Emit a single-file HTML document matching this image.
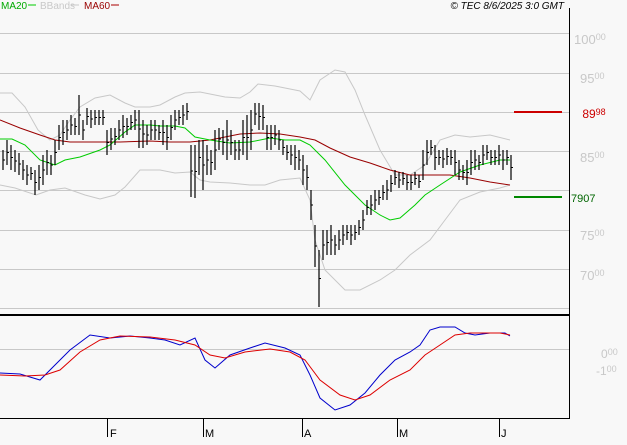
<!DOCTYPE html><html><head><style>body{margin:0;background:#f8f8f8;width:627px;height:440px;overflow:hidden;font-family:"Liberation Sans",sans-serif}</style></head><body>
<svg width="627" height="440" xmlns="http://www.w3.org/2000/svg" font-family="Liberation Sans, sans-serif">
<rect width="627" height="440" fill="#f8f8f8"/>
<g stroke="#c8c8c8" stroke-width="1">
<line x1="0" y1="33.5" x2="569" y2="33.5"/><line x1="0" y1="73.5" x2="569" y2="73.5"/><line x1="0" y1="112.5" x2="569" y2="112.5"/><line x1="0" y1="151.5" x2="569" y2="151.5"/><line x1="0" y1="190.5" x2="569" y2="190.5"/><line x1="0" y1="230.5" x2="569" y2="230.5"/><line x1="0" y1="269.5" x2="569" y2="269.5"/><line x1="0" y1="308.5" x2="569" y2="308.5"/>
<line x1="0" y1="349.5" x2="569" y2="349.5"/>
</g>
<line x1="569.5" y1="8" x2="569.5" y2="419" stroke="#000"/>
<line x1="0" y1="315" x2="569" y2="315" stroke="#000" stroke-width="2"/>
<line x1="0" y1="418.5" x2="569" y2="418.5" stroke="#000"/>
<g stroke="#000"><line x1="107.5" y1="419" x2="107.5" y2="437"/><line x1="203.5" y1="419" x2="203.5" y2="437"/><line x1="302.5" y1="419" x2="302.5" y2="437"/><line x1="397.5" y1="419" x2="397.5" y2="437"/><line x1="499.5" y1="419" x2="499.5" y2="437"/></g>
<g font-size="11" fill="#000"><text x="110" y="437">F</text><text x="205" y="437">M</text><text x="304" y="437">A</text><text x="399" y="437">M</text><text x="501" y="437">J</text></g>
<g fill="#c8c8c8" font-size="13"><text x="574" y="44">100<tspan font-size="9" dy="-4">00</tspan></text><text x="580" y="83">95<tspan font-size="9" dy="-4">00</tspan></text><text x="580" y="162">85<tspan font-size="9" dy="-4">00</tspan></text><text x="580" y="240">75<tspan font-size="9" dy="-4">00</tspan></text><text x="580" y="280">70<tspan font-size="9" dy="-4">00</tspan></text>
<text x="601" y="358" font-size="12">0<tspan font-size="9" dy="-3">00</tspan></text><text x="596" y="375" font-size="12">-1<tspan font-size="9" dy="-3">00</tspan></text></g>
<line x1="514" y1="112" x2="562" y2="112" stroke="#c00" stroke-width="2"/>
<text x="594" y="118" fill="#c00" font-size="12" text-anchor="middle">89<tspan font-size="9" dy="-3">98</tspan></text>
<line x1="514" y1="197" x2="562" y2="197" stroke="#080" stroke-width="2"/>
<text x="571" y="202" fill="#060" font-size="11">7907</text>
<g font-size="10"><text x="1" y="9" fill="#0a0">MA20</text><line x1="28" y1="5" x2="36" y2="5" stroke="#0c0"/><text x="40" y="9" fill="#c8c8c8">BBands</text><line x1="71" y1="5" x2="79" y2="5" stroke="#c8c8c8"/><text x="84" y="9" fill="#900">MA60</text><line x1="111" y1="5" x2="119" y2="5" stroke="#a00"/></g>
<text x="564" y="9" font-size="10" font-style="italic" text-anchor="end">© TEC 8/6/2025 3:0 GMT</text>
<g fill="none" stroke-width="1">
<polyline stroke="#c8c8c8" points="0,93 12,93 25,107 38,130 50,140 60,135 70,120 80,107 95,98 110,95 125,103 135,107 150,107 160,105 175,97 185,93 200,92 215,95 225,97 240,98 250,92 258,84 275,86 300,91 310,100 320,80 335,70 345,72 355,90 365,115 380,150 395,175 410,175 425,165 440,140 455,135 470,137 490,135 510,140"/>
<polyline stroke="#c8c8c8" points="0,185 15,188 36,195 50,190 65,188 85,195 100,199 115,195 125,187 140,170 160,170 175,173 190,172 200,180 210,182 230,183 250,185 265,185 280,180 300,178 310,200 315,240 325,270 345,290 360,290 380,280 395,270 410,255 430,240 445,220 460,200 480,192 500,188 510,185"/>
<polyline stroke="#900" points="0,120 20,128 40,135 55,140 70,142 100,142 120,142 150,141 170,142 190,142 210,140 240,134 260,133 280,134 300,137 315,140 330,148 350,157 370,163 390,170 410,175 450,175 470,178 490,182 510,185"/>
<polyline stroke="#0c0" points="0,139 12,139 25,145 40,160 55,165 65,160 80,157 100,150 110,145 125,132 135,125 150,125 160,126 175,126 185,128 195,137 210,140 230,143 250,142 270,138 285,140 300,140 310,145 325,160 345,185 365,205 380,215 390,220 400,218 415,205 425,195 440,185 460,172 480,165 500,160 510,160"/>
<polyline stroke="#00c" points="0,373 20,374 40,380 55,365 70,350 90,335 110,338 130,336 150,338 165,340 180,345 195,338 205,360 215,368 230,355 250,348 265,343 285,348 300,355 310,375 320,398 335,410 350,405 365,393 380,375 395,360 410,352 420,345 430,330 440,327 455,327 465,333 475,335 490,333 505,333 510,336"/>
<polyline stroke="#d00" points="0,375 25,376 45,375 60,370 80,352 100,340 120,336 150,337 175,340 195,345 210,355 225,358 245,352 270,349 290,352 305,360 320,380 340,395 355,400 370,395 390,380 410,370 425,355 440,345 455,335 470,333 500,333 510,335"/>
</g>
<g stroke="#000" stroke-width="1.2" id="bars"></g>
</svg>
<script>
var d=[[3,150,170],[7,140,165],[11,145,170],[15,150,172],[19,153,175],[23,160,180],[27,165,185],[31,167,180],[35,170,195],[39,165,190],[43,155,185],[47,150,175],[51,155,175],[55,140,165],[59,125,150],[63,120,145],[67,120,140],[71,115,135],[75,118,135],[79,95,135],[83,120,140],[87,108,125],[91,110,128],[95,110,125],[99,110,125],[103,110,125],[107,130,155],[111,128,150],[115,128,145],[119,120,140],[123,115,138],[127,118,135],[131,115,130],[135,110,130],[139,110,148],[143,120,148],[147,125,145],[151,120,140],[155,120,140],[159,125,140],[163,120,145],[167,125,150],[171,115,140],[175,110,130],[179,110,125],[183,105,125],[187,103,120],[191,145,197],[195,145,198],[199,140,175],[203,140,190],[207,145,175],[211,150,175],[215,130,170],[219,128,150],[223,130,155],[227,120,160],[231,130,155],[235,140,160],[239,140,160],[243,120,155],[247,115,160],[251,110,150],[255,103,125],[259,103,130],[263,105,130],[267,125,150],[271,125,150],[275,125,145],[279,130,150],[283,140,155],[287,145,160],[291,145,165],[295,145,170],[299,150,170],[303,155,185],[307,165,190],[311,190,220],[315,225,267],[319,250,307],[323,230,260],[327,230,255],[331,225,255],[335,235,255],[339,230,250],[343,225,245],[347,225,240],[351,225,245],[355,225,240],[359,220,235],[363,210,230],[367,200,215],[371,195,215],[375,190,210],[379,190,205],[383,185,200],[387,180,200],[391,175,192],[395,170,185],[399,172,188],[403,172,185],[407,175,190],[411,175,190],[415,172,185],[419,175,188],[423,150,180],[427,140,165],[431,140,155],[435,145,170],[439,150,165],[443,150,168],[447,148,165],[451,150,165],[455,150,175],[459,160,180],[463,165,180],[467,160,185],[471,150,175],[475,150,170],[479,155,170],[483,145,165],[487,145,160],[491,150,165],[495,150,165],[499,145,165],[503,150,170],[507,150,165],[511,155,180]];
var g=document.getElementById('bars'),s='';
d.forEach(function(b){var m=(b[1]+b[2])/2;s+='<line x1="'+b[0]+'" y1="'+b[1]+'" x2="'+b[0]+'" y2="'+b[2]+'"/><line x1="'+b[0]+'" y1="'+m+'" x2="'+(b[0]+2)+'" y2="'+m+'" stroke-width="1"/>';});
g.innerHTML=s;
</script>
</body></html>
